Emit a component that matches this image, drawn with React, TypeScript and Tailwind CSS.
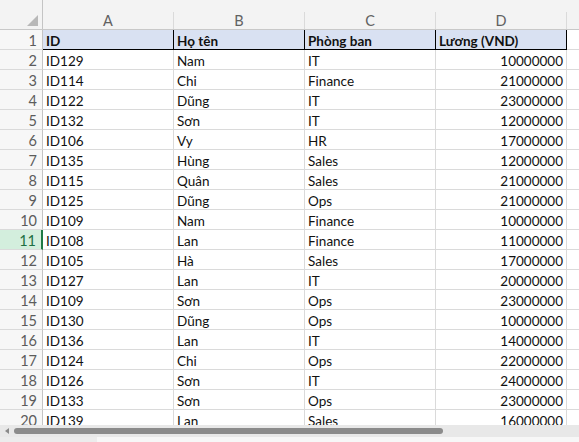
import React from "react";

const rows: [string, string, string, string][] = [
  ["ID129", "Nam", "IT", "10000000"],
  ["ID114", "Chi", "Finance", "21000000"],
  ["ID122", "Dũng", "IT", "23000000"],
  ["ID132", "Sơn", "IT", "12000000"],
  ["ID106", "Vy", "HR", "17000000"],
  ["ID135", "Hùng", "Sales", "12000000"],
  ["ID115", "Quân", "Sales", "21000000"],
  ["ID125", "Dũng", "Ops", "21000000"],
  ["ID109", "Nam", "Finance", "10000000"],
  ["ID108", "Lan", "Finance", "11000000"],
  ["ID105", "Hà", "Sales", "17000000"],
  ["ID127", "Lan", "IT", "20000000"],
  ["ID109", "Sơn", "Ops", "23000000"],
  ["ID130", "Dũng", "Ops", "10000000"],
  ["ID136", "Lan", "IT", "14000000"],
  ["ID124", "Chi", "Ops", "22000000"],
  ["ID126", "Sơn", "IT", "24000000"],
  ["ID133", "Sơn", "Ops", "23000000"],
  ["ID139", "Lan", "Sales", "16000000"],
];

const gridCols = "grid grid-cols-[43px_131px_131px_131px_131px_1fr]";
const cell = "flex items-center pt-[2px] border-r border-b border-[#dadada] leading-[16px]";

export default function App() {
  return (
    <div
      className="w-[579px] h-[442px] flex flex-col bg-white overflow-hidden text-[13.5px] text-[#111]"
      style={{ fontFamily: "Lato, 'Noto Sans', sans-serif" }}
    >
      <div className="flex-1 overflow-hidden">
        {/* Column header */}
        <div className={`${gridCols} h-[30px] bg-[#f3f3f3] border-b border-[#c8c8c8]`}>
          <div className="relative border-r border-[#c4c4c4]">
            <div className="absolute right-[4px] bottom-[3px] w-0 h-0 border-l-[11px] border-l-transparent border-b-[11px] border-b-[#b8b8b8]" />
          </div>
          {["A", "B", "C", "D", ""].map((l, i) => (
            <div key={i} className="flex flex-col">
              <div className="h-[12px]" />
              <div
                className={`flex-1 flex items-center justify-center text-[14.5px] leading-[16px] text-[#616161] ${
                  i < 4 ? "border-r border-[#dadada]" : ""
                }`}
              >
                {l}
              </div>
            </div>
          ))}
        </div>

        {/* Row 1 header row */}
        <div className={`${gridCols} h-[20px]`}>
          <div className="flex items-center justify-end pt-[2px] pr-[5px] bg-[#f7f7f7] border-r border-[#c4c4c4] border-b border-b-[#dadada] text-[14.5px] leading-[16px] text-[#5c5c5c]">
            1
          </div>
          {["ID", "Họ tên", "Phòng ban", "Lương (VND)"].map((h, i) => (
            <div
              key={i}
              className="flex items-center pt-[2px] pl-[3px] bg-[#d9e1f2] font-bold border-r border-b border-black leading-[16px]"
            >
              {h}
            </div>
          ))}
          <div className="border-b border-[#dadada]" />
        </div>

        {rows.map((r, idx) => {
          const n = idx + 2;
          const sel = n === 11;
          return (
            <div key={n} className={`${gridCols} h-[20px]`}>
              <div
                className={`flex items-center justify-end pt-[2px] pr-[5px] border-b border-[#dadada] text-[14.5px] leading-[16px] ${
                  sel
                    ? "bg-[#d3eedd] text-[#1e6e42] border-r-[2px] border-r-[#1f7a45]"
                    : "bg-[#f7f7f7] text-[#5c5c5c] border-r border-r-[#c4c4c4]"
                }`}
              >
                {n}
              </div>
              <div className={`${cell} pl-[3px]`}>{r[0]}</div>
              <div className={`${cell} pl-[3px]`}>{r[1]}</div>
              <div className={`${cell} pl-[3px]`}>{r[2]}</div>
              <div className={`${cell} justify-end pr-[3px]`}>{r[3]}</div>
              <div className="border-b border-[#dadada]" />
            </div>
          );
        })}
      </div>

      {/* Horizontal scrollbar */}
      <div className="h-[12px] shrink-0 bg-[#e8e8e8] flex items-center">
        <div className="w-[14px] flex items-center justify-center">
          <div className="w-0 h-0 border-t-[3px] border-t-transparent border-b-[3px] border-b-transparent border-r-[4px] border-r-[#8a8a8a]" />
        </div>
        <div className="w-[429px] h-[6px] rounded-full bg-[#8b8b8b]" />
      </div>
      <div className="h-[5px] shrink-0 flex">
        <div className="w-[97px] bg-[#ececec]" />
        <div className="flex-1 bg-[#f7f7f7]" />
      </div>
    </div>
  );
}
